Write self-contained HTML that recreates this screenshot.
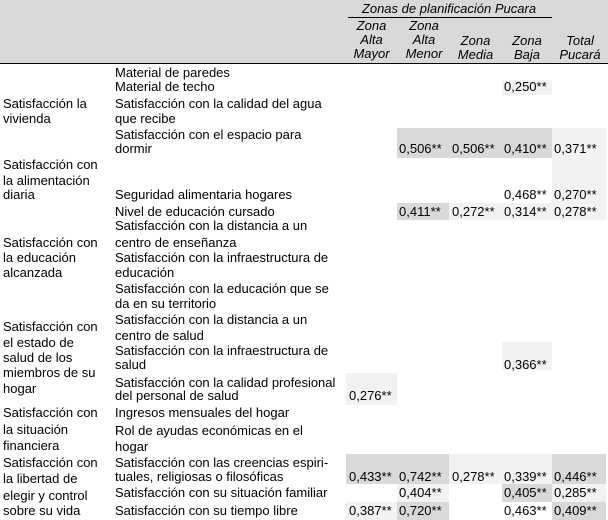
<!DOCTYPE html>
<html><head><meta charset="utf-8"><style>
body{margin:0;width:608px;height:520px;background:#fff;position:relative;overflow:hidden;font-family:"Liberation Sans",Arial,sans-serif;font-size:13px;color:#000}
.t{position:absolute;white-space:nowrap;line-height:16px}
.b{position:absolute}
.d{background:#d9d9d9}.l{background:#f2f2f2}
.h{position:absolute;font-style:italic;text-align:center;line-height:14px;white-space:nowrap}
</style></head><body>
<div class="b" style="left:0;top:0;width:608px;height:63px;background:#d9d9d9"></div>
<div class="b" style="left:0;top:63px;width:608px;height:1px;background:#000"></div>
<div class="b" style="left:348px;top:17px;width:204px;height:1px;background:#000"></div>
<div class="h" style="left:346px;top:2px;width:206px">Zonas de planificación Pucara</div>
<div class="h" style="left:346px;top:19px;width:51px">Zona<br>Alta<br>Mayor</div>
<div class="h" style="left:397px;top:19px;width:54px">Zona<br>Alta<br>Menor</div>
<div class="h" style="left:449px;top:34px;width:53px">Zona<br>Media</div>
<div class="h" style="left:502px;top:34px;width:50px">Zona<br>Baja</div>
<div class="h" style="left:552px;top:34px;width:56px">Total<br>Pucará</div>

<div class="b l" style="left:502px;top:80px;width:50px;height:15px"></div>
<div class="b d" style="left:397px;top:128px;width:155px;height:30px"></div>
<div class="b l" style="left:552px;top:128px;width:54px;height:92px"></div>
<div class="b d" style="left:397px;top:203px;width:52px;height:17px"></div>
<div class="b l" style="left:449px;top:203px;width:103px;height:17px"></div>
<div class="b l" style="left:502px;top:342px;width:50px;height:28px"></div>
<div class="b l" style="left:346px;top:373px;width:51px;height:32px"></div>
<div class="b d" style="left:346px;top:454px;width:103px;height:30px"></div>
<div class="b l" style="left:449px;top:454px;width:103px;height:30px"></div>
<div class="b d" style="left:552px;top:454px;width:54px;height:30px"></div>
<div class="b l" style="left:397px;top:484px;width:52px;height:18px"></div>
<div class="b d" style="left:502px;top:484px;width:50px;height:18px"></div>
<div class="b l" style="left:552px;top:484px;width:54px;height:18px"></div>
<div class="b l" style="left:346px;top:502px;width:51px;height:18px"></div>
<div class="b d" style="left:397px;top:502px;width:52px;height:18px"></div>
<div class="b d" style="left:552px;top:502px;width:54px;height:18px"></div>

<div class="t" style="left:3px;top:96px">Satisfacción la</div>
<div class="t" style="left:3px;top:111px">vivienda</div>
<div class="t" style="left:3px;top:157px">Satisfacción con</div>
<div class="t" style="left:3px;top:173px">la alimentación</div>
<div class="t" style="left:3px;top:187px">diaria</div>
<div class="t" style="left:3px;top:235px">Satisfacción con</div>
<div class="t" style="left:3px;top:250px">la educación</div>
<div class="t" style="left:3px;top:265px">alcanzada</div>
<div class="t" style="left:3px;top:319px">Satisfacción con</div>
<div class="t" style="left:3px;top:335px">el estado de</div>
<div class="t" style="left:3px;top:350px">salud de los</div>
<div class="t" style="left:3px;top:365px">miembros de su</div>
<div class="t" style="left:3px;top:381px">hogar</div>
<div class="t" style="left:3px;top:405px">Satisfacción con</div>
<div class="t" style="left:3px;top:422px">la situación</div>
<div class="t" style="left:3px;top:438px">financiera</div>
<div class="t" style="left:3px;top:455px">Satisfacción con</div>
<div class="t" style="left:3px;top:471px">la libertad de</div>
<div class="t" style="left:3px;top:488px">elegir y control</div>
<div class="t" style="left:3px;top:503px">sobre su vida</div>

<div class="t" style="left:115px;top:65px">Material de paredes</div>
<div class="t" style="left:115px;top:79px">Material de techo</div>
<div class="t" style="left:115px;top:96px">Satisfacción con la calidad del agua</div>
<div class="t" style="left:115px;top:111px">que recibe</div>
<div class="t" style="left:115px;top:127px">Satisfacción con el espacio para</div>
<div class="t" style="left:115px;top:141px">dormir</div>
<div class="t" style="left:115px;top:187px">Seguridad alimentaria hogares</div>
<div class="t" style="left:115px;top:204px">Nivel de educación cursado</div>
<div class="t" style="left:115px;top:218px">Satisfacción con la distancia a un</div>
<div class="t" style="left:115px;top:235px">centro de enseñanza</div>
<div class="t" style="left:115px;top:250px">Satisfacción con la infraestructura de</div>
<div class="t" style="left:115px;top:265px">educación</div>
<div class="t" style="left:115px;top:281px">Satisfacción con la educación que se</div>
<div class="t" style="left:115px;top:296px">da en su territorio</div>
<div class="t" style="left:115px;top:312px">Satisfacción con la distancia a un</div>
<div class="t" style="left:115px;top:328px">centro de salud</div>
<div class="t" style="left:115px;top:343px">Satisfacción con la infraestructura de</div>
<div class="t" style="left:115px;top:357px">salud</div>
<div class="t" style="left:115px;top:375px">Satisfacción con la calidad profesional</div>
<div class="t" style="left:115px;top:388px">del personal de salud</div>
<div class="t" style="left:115px;top:405px">Ingresos mensuales del hogar</div>
<div class="t" style="left:115px;top:423px">Rol de ayudas económicas en el</div>
<div class="t" style="left:115px;top:439px">hogar</div>
<div class="t" style="left:115px;top:455px">Satisfacción con las creencias espiri-</div>
<div class="t" style="left:115px;top:469px">tuales, religiosas o filosóficas</div>
<div class="t" style="left:115px;top:485px">Satisfacción con su situación familiar</div>
<div class="t" style="left:115px;top:503px">Satisfacción con su tiempo libre</div>

<div class="t" style="left:504px;top:79px">0,250**</div>
<div class="t" style="left:399px;top:141px">0,506**</div>
<div class="t" style="left:452px;top:141px">0,506**</div>
<div class="t" style="left:504px;top:141px">0,410**</div>
<div class="t" style="left:554px;top:141px">0,371**</div>
<div class="t" style="left:504px;top:187px">0,468**</div>
<div class="t" style="left:554px;top:187px">0,270**</div>
<div class="t" style="left:399px;top:204px">0,411**</div>
<div class="t" style="left:452px;top:204px">0,272**</div>
<div class="t" style="left:504px;top:204px">0,314**</div>
<div class="t" style="left:554px;top:204px">0,278**</div>
<div class="t" style="left:504px;top:357px">0,366**</div>
<div class="t" style="left:349px;top:388px">0,276**</div>
<div class="t" style="left:349px;top:469px">0,433**</div>
<div class="t" style="left:399px;top:469px">0,742**</div>
<div class="t" style="left:452px;top:469px">0,278**</div>
<div class="t" style="left:504px;top:469px">0,339**</div>
<div class="t" style="left:554px;top:469px">0,446**</div>
<div class="t" style="left:399px;top:485px">0,404**</div>
<div class="t" style="left:504px;top:485px">0,405**</div>
<div class="t" style="left:554px;top:485px">0,285**</div>
<div class="t" style="left:349px;top:503px">0,387**</div>
<div class="t" style="left:399px;top:503px">0,720**</div>
<div class="t" style="left:504px;top:503px">0,463**</div>
<div class="t" style="left:554px;top:503px">0,409**</div>
</body></html>
